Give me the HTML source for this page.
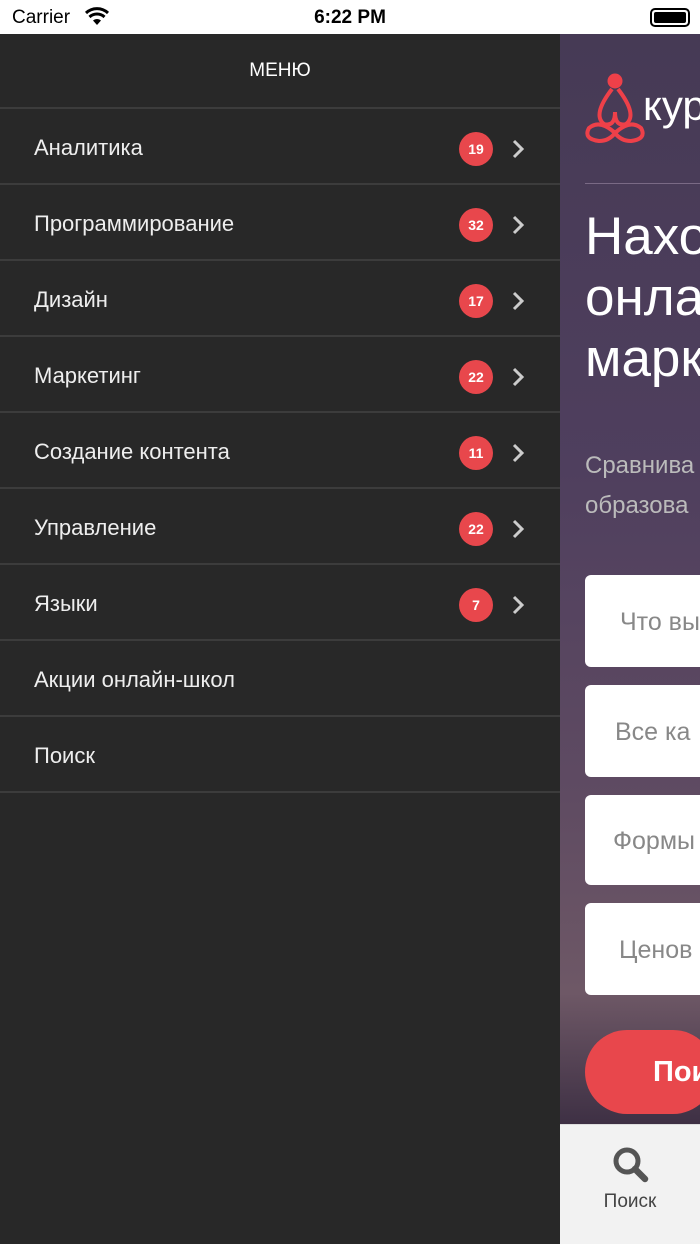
<!DOCTYPE html>
<html><head><meta charset="utf-8"><style>
*{margin:0;padding:0;box-sizing:border-box}
body{width:700px;height:1244px;overflow:hidden;position:relative;font-family:"Liberation Sans","Noto Sans CJK SC",sans-serif;background:#fff}
.sb{position:absolute;left:0;top:0;width:700px;height:34px;background:#fff;color:#000}
.menu{position:absolute;left:0;top:34px;width:560px;height:1210px;background:#282828}
.mh{height:75px;color:#fff;text-align:center;line-height:74px;font-size:19px;border-bottom:2px solid #3c3c3c}
.row{height:76px;border-bottom:2px solid #3c3c3c;position:relative;color:#eee;font-size:22px;line-height:78px;padding-left:34px}
.bd{position:absolute;left:459px;top:23px;width:34px;height:34px;border-radius:50%;background:#e8474c;color:#fff;font-size:14px;font-weight:bold;text-align:center;line-height:34px}
.ch{position:absolute;left:511px;top:30px}
.right{position:absolute;left:560px;top:34px;width:140px;height:1090px;background:linear-gradient(#463a55 0%,#4f3f5e 40%,#5f4b62 70%,#6e5866 88%,#3e3044 100%)}
.field{position:absolute;left:25px;width:130px;background:#fff;border-radius:6px;color:#888;font-size:25px;padding-left:35px}
.tab{position:absolute;left:560px;top:1124px;width:140px;height:120px;background:#f2f2f2;border-top:1px solid #ddd}
</style></head><body>
<div class="sb">
<span style="position:absolute;left:12px;top:7px;font-size:19px">Carrier</span>
<svg style="position:absolute;left:84px;top:6px" width="26" height="20" viewBox="0 0 26 20"><path d="M13 19l4-4.5a6 6 0 0 0-8 0z" fill="#000"/><path d="M5.5 11a11 11 0 0 1 15 0" stroke="#000" stroke-width="3" fill="none"/><path d="M2 7a16 16 0 0 1 22 0" stroke="#000" stroke-width="3" fill="none"/></svg>
<span style="position:absolute;left:0;width:700px;text-align:center;top:7px;font-size:19px;font-weight:bold">6:22 PM</span>
<div style="position:absolute;left:650px;top:8px;width:40px;height:19px;border:2px solid #000;border-radius:5px;padding:2px"><div style="background:#000;width:100%;height:100%;border-radius:2px"></div></div>
</div>
<div class="menu">
<div class="mh">МЕНЮ</div>
<div class="row">Аналитика<div class="bd">19</div><svg class="ch" width="14" height="20"><path d="M3 2l8 8-8 8" stroke="#ccc" stroke-width="3" fill="none"/></svg></div>
<div class="row">Программирование<div class="bd">32</div><svg class="ch" width="14" height="20"><path d="M3 2l8 8-8 8" stroke="#ccc" stroke-width="3" fill="none"/></svg></div>
<div class="row">Дизайн<div class="bd">17</div><svg class="ch" width="14" height="20"><path d="M3 2l8 8-8 8" stroke="#ccc" stroke-width="3" fill="none"/></svg></div>
<div class="row">Маркетинг<div class="bd">22</div><svg class="ch" width="14" height="20"><path d="M3 2l8 8-8 8" stroke="#ccc" stroke-width="3" fill="none"/></svg></div>
<div class="row">Создание контента<div class="bd">11</div><svg class="ch" width="14" height="20"><path d="M3 2l8 8-8 8" stroke="#ccc" stroke-width="3" fill="none"/></svg></div>
<div class="row">Управление<div class="bd">22</div><svg class="ch" width="14" height="20"><path d="M3 2l8 8-8 8" stroke="#ccc" stroke-width="3" fill="none"/></svg></div>
<div class="row">Языки<div class="bd">7</div><svg class="ch" width="14" height="20"><path d="M3 2l8 8-8 8" stroke="#ccc" stroke-width="3" fill="none"/></svg></div>
<div class="row">Акции онлайн-школ</div>
<div class="row">Поиск</div>
</div>
<div class="right">
<svg style="position:absolute;left:24px;top:38px" width="62" height="76" viewBox="0 0 62 76"><circle cx="31" cy="9" r="7.5" fill="#ee4049"/><path d="M28 17q-20 26-8 35q11 3 11-12q0 15 11 12q12-9-8-35" stroke="#ee4049" stroke-width="4" fill="none"/><path d="M31 61q-15-14-26-5q-6 11 10 13q10 0 16-8q6 8 16 8q16-2 10-13q-11-9-26 5" stroke="#ee4049" stroke-width="4" fill="none"/></svg>
<div style="position:absolute;left:83px;top:48px;color:#fff;font-size:42px">кур</div>
<div style="position:absolute;left:25px;top:149px;width:115px;height:1px;background:#7a6a85"></div>
<div style="position:absolute;left:25px;top:172px;color:#fff;font-size:53px;line-height:61px;white-space:nowrap">Нахо<br>онла<br>марк</div>
<div style="position:absolute;left:25px;top:412px;color:#bbb;font-size:24px;line-height:40px;white-space:nowrap">Сравнива<br>образова</div>
<div class="field" style="top:541px;height:92px;line-height:94px">Что вы</div>
<div class="field" style="top:651px;height:92px;line-height:94px;padding-left:30px">Все ка</div>
<div class="field" style="top:761px;height:90px;line-height:92px;padding-left:28px">Формы</div>
<div class="field" style="top:869px;height:92px;line-height:94px;padding-left:34px">Ценов</div>
<div style="position:absolute;left:25px;top:996px;width:130px;height:84px;border-radius:42px;background:#e8474c;color:#fff;font-size:29px;font-weight:bold;line-height:84px;padding-left:68px">Пои</div>
</div>
<div class="tab">
<svg style="position:absolute;left:51px;top:20px" width="40" height="40" viewBox="0 0 40 40"><circle cx="16" cy="16" r="11" stroke="#555" stroke-width="5" fill="none"/><path d="M24 24l10 10" stroke="#555" stroke-width="6.5" stroke-linecap="round"/></svg>
<div style="position:absolute;left:0;width:140px;text-align:center;top:66px;font-size:19px;color:#444">Поиск</div>
</div>
</body></html>
